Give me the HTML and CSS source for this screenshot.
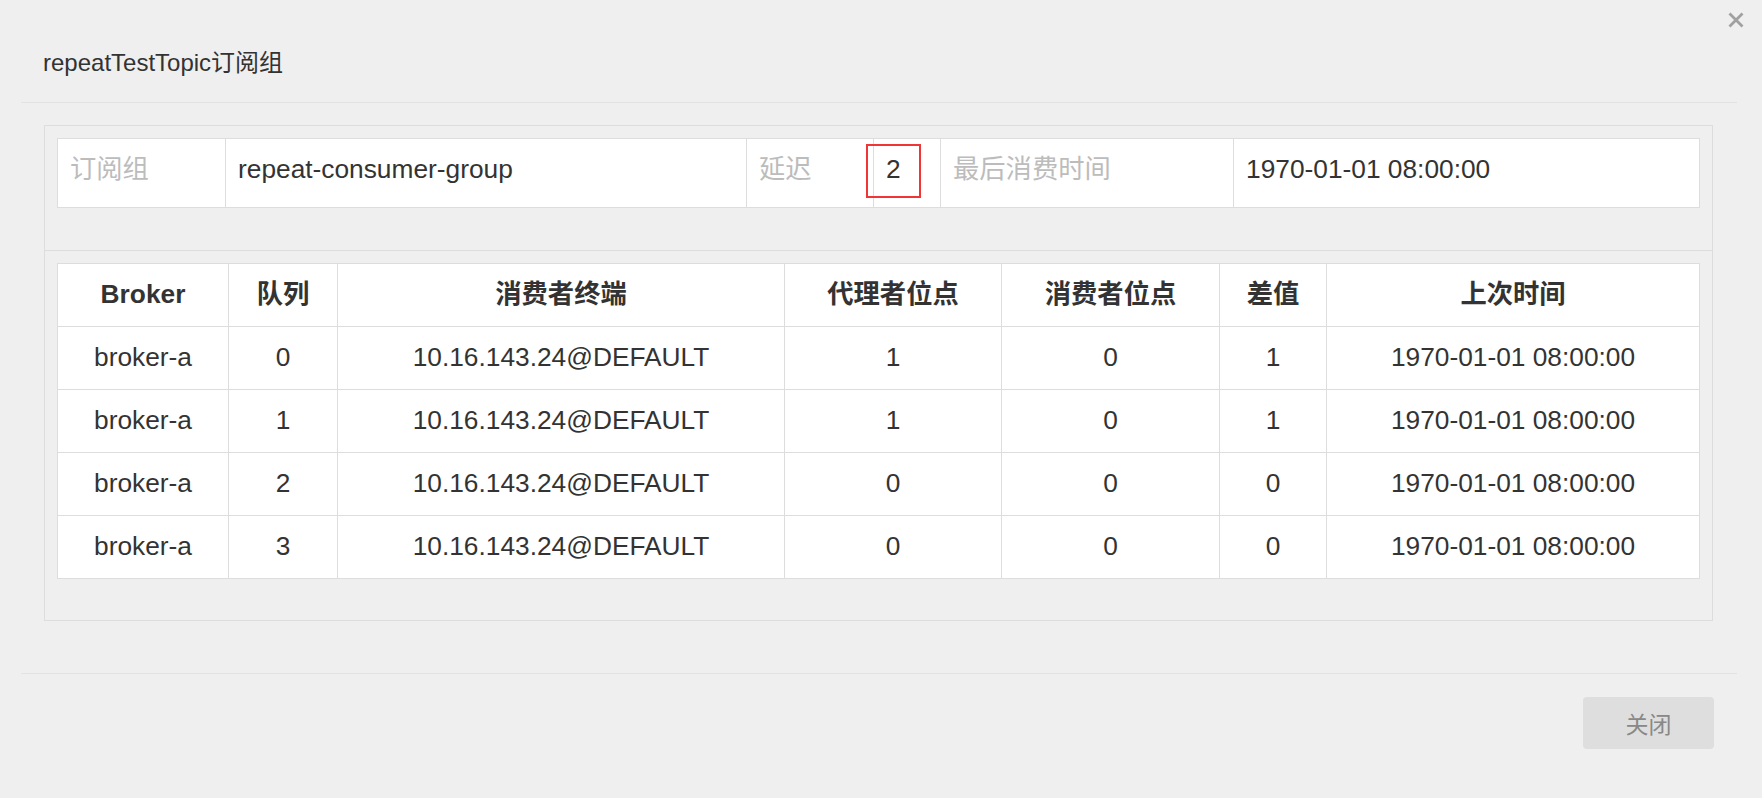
FILE: index.html
```html
<!DOCTYPE html>
<html lang="zh-CN">
<head>
<meta charset="utf-8">
<title>repeatTestTopic订阅组</title>
<link rel="stylesheet" href="styles.css">
</head>
<body>
<div class="dialog">
  <button class="dialog-close" aria-label="关闭">
    <svg width="16" height="16" viewBox="0 0 16 16"><path d="M1.5 1.5 L14.5 14.5 M14.5 1.5 L1.5 14.5" stroke="#a0a0a0" stroke-width="2.8" fill="none"/></svg>
  </button>
  <div class="dialog-header"><h3 class="dialog-title">repeatTestTopic订阅组</h3></div>
  <div class="dialog-body">
    <div class="panel">
      <div class="panel-section">
        <table class="info-table">
          <colgroup>
            <col class="c-168"><col class="c-521"><col class="c-127"><col class="c-67"><col class="c-293"><col class="c-466">
          </colgroup>
          <tr>
            <td class="label">订阅组</td>
            <td>repeat-consumer-group</td>
            <td class="label">延迟</td>
            <td class="marked">2<span class="marker"></span></td>
            <td class="label">最后消费时间</td>
            <td>1970-01-01 08:00:00</td>
          </tr>
        </table>
      </div>
      <div class="panel-section last">
        <table class="data-table">
          <colgroup>
            <col class="c-171"><col class="c-109"><col class="c-447"><col class="c-217"><col class="c-218"><col class="c-107"><col class="c-373">
          </colgroup>
          <thead>
            <tr><th>Broker</th><th>队列</th><th>消费者终端</th><th>代理者位点</th><th>消费者位点</th><th>差值</th><th>上次时间</th></tr>
          </thead>
          <tbody>
            <tr><td>broker-a</td><td>0</td><td>10.16.143.24@DEFAULT</td><td>1</td><td>0</td><td>1</td><td>1970-01-01 08:00:00</td></tr>
            <tr><td>broker-a</td><td>1</td><td>10.16.143.24@DEFAULT</td><td>1</td><td>0</td><td>1</td><td>1970-01-01 08:00:00</td></tr>
            <tr><td>broker-a</td><td>2</td><td>10.16.143.24@DEFAULT</td><td>0</td><td>0</td><td>0</td><td>1970-01-01 08:00:00</td></tr>
            <tr><td>broker-a</td><td>3</td><td>10.16.143.24@DEFAULT</td><td>0</td><td>0</td><td>0</td><td>1970-01-01 08:00:00</td></tr>
          </tbody>
        </table>
      </div>
    </div>
  </div>
  <div class="dialog-footer"><button class="btn">关闭</button></div>
</div>
</body>
</html>
```

FILE: styles.css
```css
html, body {
  margin: 0;
  background: #efefef;
}
body {
  font-family: "Liberation Sans", Arial, "Noto Sans CJK SC", sans-serif;
  color: #333;
}
.dialog {
  position: relative;
}
.dialog-close {
  position: absolute;
  top: 12px;
  right: 18px;
  width: 16px;
  height: 16px;
  padding: 0;
  border: 0;
  background: none;
}
.dialog-close svg { display: block; }

.dialog-header {
  margin: 0 25px 0 21px;
  padding: 47px 0 23px 22px;
  border-bottom: 1px solid #e3e3e3;
}
.dialog-title {
  margin: 0;
  font-size: 24px;
  line-height: 32px;
  font-weight: normal;
  color: #333;
}

.dialog-body {
  margin: 0 25px 0 21px;
  padding: 22px 24px 52px 23px;
}
.panel {
  border: 1px solid #dddddd;
}
.panel-section {
  padding: 12px 12px 42px;
}
.panel-section.last {
  border-top: 1px solid #dddddd;
  padding-bottom: 41px;
}

table {
  border-collapse: separate;
  border-spacing: 0;
  table-layout: fixed;
  width: 1643px;
  background: #fff;
  border-top: 1px solid #dddddd;
  border-left: 1px solid #dddddd;
  font-size: 26.3px;
  line-height: 36px;
}
td, th {
  border-right: 1px solid #dddddd;
  border-bottom: 1px solid #dddddd;
  vertical-align: top;
  white-space: nowrap;
}
.info-table td {
  padding: 12px 12px 20px;
  text-align: left;
  color: #333;
}
.info-table td.label {
  color: #bcbcbc;
}
.marked {
  position: relative;
}
.marker {
  position: absolute;
  left: -8px;
  top: 5px;
  width: 55px;
  height: 54px;
  box-sizing: border-box;
  border: 2px solid #ef3535;
}
.data-table th,
.data-table td {
  padding: 12px 6px 14px;
  text-align: center;
}
.data-table th {
  font-weight: bold;
  color: #333;
}

.c-168 { width: 168px; }
.c-521 { width: 521px; }
.c-127 { width: 127px; }
.c-67 { width: 67px; }
.c-293 { width: 293px; }
.c-466 { width: 466px; }
.c-171 { width: 171px; }
.c-109 { width: 109px; }
.c-447 { width: 447px; }
.c-217 { width: 217px; }
.c-218 { width: 218px; }
.c-107 { width: 107px; }
.c-373 { width: 373px; }

.dialog-footer {
  margin: 0 25px 0 21px;
  border-top: 1px solid #e3e3e3;
  padding: 23px 23px 0 0;
  display: flex;
  justify-content: flex-end;
}
.btn {
  width: 131px;
  height: 52px;
  padding: 0;
  border: 0;
  border-radius: 4px;
  background: #dedede;
  color: #888;
  font-family: "Liberation Sans", "Noto Sans CJK SC", sans-serif;
  font-size: 23px;
}
```
